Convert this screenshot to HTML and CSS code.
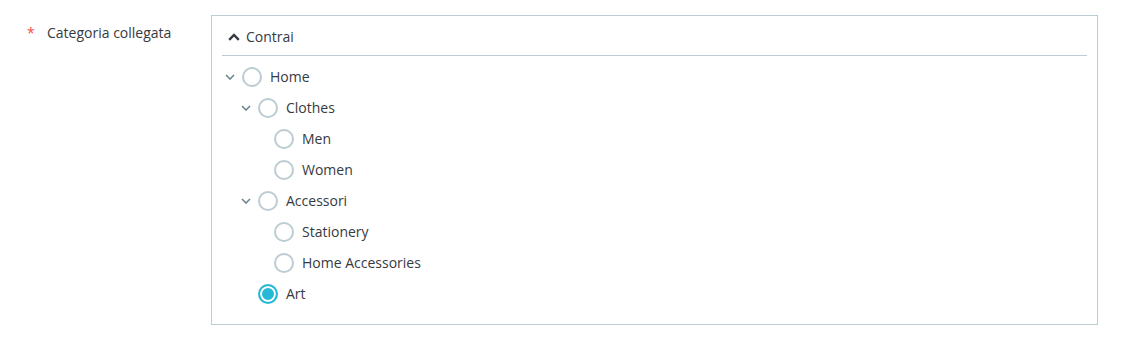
FILE: index.html
```html
<!DOCTYPE html>
<html>
<head>
<meta charset="utf-8">
<link rel="stylesheet" href="styles.css">
</head>
<body>
<div class="form-row">
  <div class="label"><span class="req">*</span><span class="label-text">Categoria collegata</span></div>
  <div class="tree-box">
    <div class="tree-header">
      <svg class="up" width="12" height="8" viewBox="0 0 12 8"><path d="M1.2 6.8 L6 2 L10.8 6.8" fill="none" stroke="#363a41" stroke-width="2.4"/></svg>
      <span>Contrai</span>
    </div>
    <div class="tree">
      <div class="node lvl0"><span class="chev"><svg width="10" height="6" viewBox="0 0 10 6"><path d="M1 1 L5 5 L9 1" fill="none" stroke="#6c868e" stroke-width="1.6"/></svg></span><span class="radio"></span><span class="txt">Home</span></div>
      <div class="node lvl1"><span class="chev"><svg width="10" height="6" viewBox="0 0 10 6"><path d="M1 1 L5 5 L9 1" fill="none" stroke="#6c868e" stroke-width="1.6"/></svg></span><span class="radio"></span><span class="txt">Clothes</span></div>
      <div class="node lvl2"><span class="chev"></span><span class="radio"></span><span class="txt">Men</span></div>
      <div class="node lvl2"><span class="chev"></span><span class="radio"></span><span class="txt">Women</span></div>
      <div class="node lvl1"><span class="chev"><svg width="10" height="6" viewBox="0 0 10 6"><path d="M1 1 L5 5 L9 1" fill="none" stroke="#6c868e" stroke-width="1.6"/></svg></span><span class="radio"></span><span class="txt">Accessori</span></div>
      <div class="node lvl2"><span class="chev"></span><span class="radio"></span><span class="txt">Stationery</span></div>
      <div class="node lvl2"><span class="chev"></span><span class="radio"></span><span class="txt">Home Accessories</span></div>
      <div class="node lvl1"><span class="chev"></span><span class="radio checked"></span><span class="txt">Art</span></div>
    </div>
  </div>
</div>
</body>
</html>
```
FILE: styles.css
```css
html, body {
  margin: 0;
  padding: 0;
  background: #fff;
  font-family: "Open Sans", "Noto Sans", sans-serif;
  font-size: 14px;
  color: #363a41;
}
.form-row {
  display: flex;
  padding-top: 15px;
}
.label {
  width: 211px;
  box-sizing: border-box;
  padding-left: 27px;
  padding-top: 8px;
  display: flex;
  line-height: 20px;
}
.req {
  color: #f54c3e;
  width: 20px;
}
.tree-box {
  width: 887px;
  height: 310px;
  box-sizing: border-box;
  border: 1px solid #bbcdd2;
  padding: 0 10px;
}
.tree-header {
  height: 40px;
  box-sizing: border-box;
  border-bottom: 1px solid #bbcdd2;
  display: flex;
  align-items: center;
  padding-left: 6px;
  padding-top: 2px;
  gap: 6px;
}
.up { display: block; }
.tree {
  padding-top: 5px;
}
.node {
  height: 31px;
  display: flex;
  align-items: center;
}
.lvl1 { padding-left: 16px; }
.lvl2 { padding-left: 32px; }
.chev {
  width: 16px;
  margin-right: 4px;
  display: flex;
  justify-content: center;
  align-items: center;
}
.chev svg { display: block; }
.radio {
  width: 20px;
  height: 20px;
  box-sizing: border-box;
  border: 2px solid #bbcdd2;
  border-radius: 50%;
  margin-right: 8px;
  background: #fff;
}
.radio.checked {
  border: 2px solid #25b9d7;
  background: #25b9d7;
  box-shadow: inset 0 0 0 2px #fff;
}
```
